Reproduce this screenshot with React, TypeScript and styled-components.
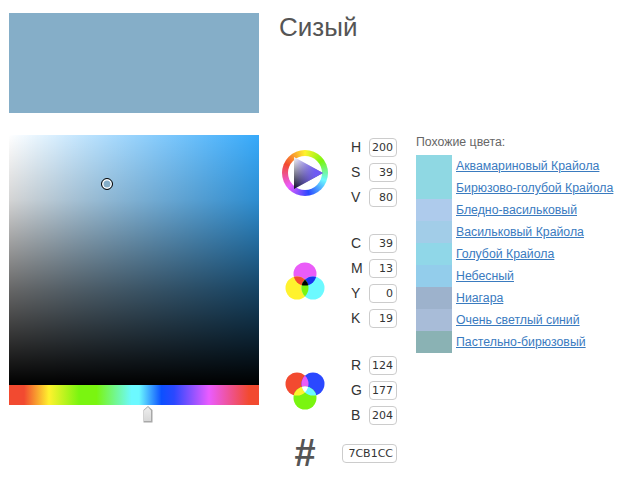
import { useId } from "react";
import styled, { createGlobalStyle } from "styled-components";

const HSV = { h: 200, s: 39, v: 80 };
const PICKER_SIZE = 250;

const SIMILAR_COLORS = [
  { name: "Аквамариновый Крайола", color: "#8fd8e3" },
  { name: "Бирюзово-голубой Крайола", color: "#8fd8e3" },
  { name: "Бледно-васильковый", color: "#aecbec" },
  { name: "Васильковый Крайола", color: "#a2cde8" },
  { name: "Голубой Крайола", color: "#90d7e8" },
  { name: "Небесный", color: "#93cdeb" },
  { name: "Ниагара", color: "#9db2cc" },
  { name: "Очень светлый синий", color: "#a8bcd8" },
  { name: "Пастельно-бирюзовый", color: "#8ab2b4" },
];

const RED = "#f24a30";
const GREEN = "#7af510";
const BLUE = "#2a48ff";
const CYAN = "#6cf9ff";
const MAGENTA = "#ea5cf8";
const YELLOW = "#fff22e";

function WheelIcon() {
  return (
    <WheelRing>
      <WheelTriangle width="46" height="46" viewBox="0 0 46 46">
        <defs>
          <linearGradient id="tri-shade" x1="0" y1="0" x2="0" y2="1">
            <stop offset="0" stopColor="#ffffff" />
            <stop offset="1" stopColor="#0a0a1e" />
          </linearGradient>
          <linearGradient id="tri-hue" x1="0" y1="0" x2="1" y2="0">
            <stop offset="0" stopColor="#6f5af5" stopOpacity="0" />
            <stop offset="0.75" stopColor="#6f5af5" />
          </linearGradient>
        </defs>
        <polygon points="12,7 41,23 12,39" fill="url(#tri-shade)" />
        <polygon points="12,7 41,23 12,39" fill="url(#tri-hue)" />
      </WheelTriangle>
    </WheelRing>
  );
}

interface VennCircle {
  cx: number;
  cy: number;
  fill: string;
}

interface VennIconProps {
  a: VennCircle;
  b: VennCircle;
  c: VennCircle;
  ab: string;
  ac: string;
  bc: string;
  abc: string;
}

// three overlapping discs, every overlap gets its own colour
function VennIcon({ a, b, c, ab, ac, bc, abc }: VennIconProps) {
  const id = useId();
  const r = 11.5;
  return (
    <IconSvg width="40" height="38" viewBox="0 0 40 38">
      <defs>
        <clipPath id={`${id}a`}>
          <circle cx={a.cx} cy={a.cy} r={r} />
        </clipPath>
        <clipPath id={`${id}b`}>
          <circle cx={b.cx} cy={b.cy} r={r} />
        </clipPath>
      </defs>
      <circle cx={a.cx} cy={a.cy} r={r} fill={a.fill} />
      <circle cx={b.cx} cy={b.cy} r={r} fill={b.fill} />
      <circle cx={c.cx} cy={c.cy} r={r} fill={c.fill} />
      <g clipPath={`url(#${id}a)`}>
        <circle cx={b.cx} cy={b.cy} r={r} fill={ab} />
        <circle cx={c.cx} cy={c.cy} r={r} fill={ac} />
      </g>
      <g clipPath={`url(#${id}b)`}>
        <circle cx={c.cx} cy={c.cy} r={r} fill={bc} />
      </g>
      <g clipPath={`url(#${id}a)`}>
        <g clipPath={`url(#${id}b)`}>
          <circle cx={c.cx} cy={c.cy} r={r} fill={abc} />
        </g>
      </g>
    </IconSvg>
  );
}

function ChannelRow(props: { label: string; value: string | number }) {
  return (
    <Row>
      <RowLabel>{props.label}</RowLabel>
      <ValueInput readOnly value={props.value} />
    </Row>
  );
}

export default function App() {
  return (
    <Page>
      <GlobalStyle />
      <Header>
        <Swatch />
        <Title>Сизый</Title>
      </Header>
      <Body>
        <PickerColumn>
          <Picker>
            <Marker
              style={{
                left: (HSV.s / 100) * PICKER_SIZE,
                top: ((100 - HSV.v) / 100) * PICKER_SIZE,
              }}
            />
          </Picker>
          <HueBar />
          <HueTrack>
            <HueThumb
              width="10"
              height="17"
              viewBox="0 0 10 17"
              style={{ left: (HSV.h / 360) * PICKER_SIZE }}
            >
              <defs>
                <linearGradient id="thumb" x1="0" y1="0" x2="0" y2="1">
                  <stop offset="0" stopColor="#eeeeee" />
                  <stop offset="1" stopColor="#d8d8d8" />
                </linearGradient>
              </defs>
              <polygon points="5,0 9.5,4 9.5,16.5 0.5,16.5 0.5,4" fill="#a8a8a8" />
              <polygon points="5,1 8,4.5 8,15 1,15 1,4.5" fill="url(#thumb)" />
            </HueThumb>
          </HueTrack>
        </PickerColumn>

        <Channels>
          <Group $top={3}>
            <IconCell>
              <WheelIcon />
            </IconCell>
            <Fields>
              <ChannelRow label="H" value={200} />
              <ChannelRow label="S" value={39} />
              <ChannelRow label="V" value={80} />
            </Fields>
          </Group>
          <Group $top={27}>
            <IconCell>
              <VennIcon
                a={{ cx: 20, cy: 12, fill: MAGENTA }}
                b={{ cx: 12, cy: 26, fill: YELLOW }}
                c={{ cx: 28, cy: 26, fill: CYAN }}
                ab={RED}
                ac="#1a30f0"
                bc={GREEN}
                abc="#000"
              />
            </IconCell>
            <Fields>
              <ChannelRow label="C" value={39} />
              <ChannelRow label="M" value={13} />
              <ChannelRow label="Y" value={0} />
              <ChannelRow label="K" value={19} />
            </Fields>
          </Group>
          <Group $top={28}>
            <IconCell>
              <VennIcon
                a={{ cx: 12, cy: 12, fill: RED }}
                b={{ cx: 28, cy: 12, fill: BLUE }}
                c={{ cx: 20, cy: 26, fill: GREEN }}
                ab={MAGENTA}
                ac={YELLOW}
                bc={CYAN}
                abc="#fff"
              />
            </IconCell>
            <Fields>
              <ChannelRow label="R" value={124} />
              <ChannelRow label="G" value={177} />
              <ChannelRow label="B" value={204} />
            </Fields>
          </Group>
          <Group $top={19}>
            <IconCell>
              <Hash>#</Hash>
            </IconCell>
            <HexInput readOnly value="7CB1CC" />
          </Group>
        </Channels>

        <Similar>
          <SimilarHeading>Похожие цвета:</SimilarHeading>
          {SIMILAR_COLORS.map((item) => (
            <SimilarRow key={item.name}>
              <SimilarChip $color={item.color} />
              <SimilarLink href="#">{item.name}</SimilarLink>
            </SimilarRow>
          ))}
        </Similar>
      </Body>
    </Page>
  );
}

const GlobalStyle = createGlobalStyle`
  html, body {
    margin: 0;
    background: #fff;
    font-family: "Liberation Sans", Arial, sans-serif;
  }
`;

const Page = styled.div`
  display: flex;
  flex-direction: column;
  gap: 22px;
  width: 630px;
  height: 480px;
  padding: 13px 0 0 9px;
  box-sizing: border-box;
  overflow: hidden;
`;

const Header = styled.div`
  display: flex;
  gap: 20px;
`;

const Swatch = styled.div`
  width: 250px;
  height: 100px;
  background: #85aec8;
`;

const Title = styled.h1`
  margin: 0;
  font-size: 26px;
  line-height: 28px;
  font-weight: normal;
  color: #555;
`;

const Body = styled.div`
  display: flex;
`;

const PickerColumn = styled.div`
  display: flex;
  flex-direction: column;
  width: 250px;
  margin-right: 21px;
`;

const Picker = styled.div`
  position: relative;
  height: 250px;
  background:
    linear-gradient(to bottom, rgba(0, 0, 0, 0), rgba(0, 0, 0, 0.17) 26%, rgba(0, 0, 0, 0.6) 62%, #000),
    linear-gradient(to right, #fff, rgba(255, 255, 255, 0.68) 30%, rgba(255, 255, 255, 0)),
    #36a9fa;
`;

const Marker = styled.div`
  position: absolute;
  width: 10px;
  height: 10px;
  margin: -7px 0 0 -6px;
  border: 1px solid #000;
  border-radius: 50%;
  background: #85aec8;
  box-shadow: inset 0 0 0 1.5px #fff;
  box-sizing: content-box;
`;

const HueBar = styled.div`
  height: 20px;
  background: linear-gradient(
    to right,
    #f24a30 0%,
    #f24a30 6%,
    #fff22e 16%,
    #7af510 28%,
    #7af510 35%,
    #6cf9ff 49%,
    #6cf9ff 52%,
    #0c50ff 61%,
    #2a48ff 66%,
    #ea5cff 80%,
    #f24a30 96%,
    #f24a30 100%
  );
`;

const HueTrack = styled.div`
  position: relative;
  height: 20px;
`;

const HueThumb = styled.svg`
  position: absolute;
  top: 1px;
  margin-left: -5px;
`;

const Channels = styled.div`
  display: flex;
  flex-direction: column;
  width: 117px;
  margin-right: 19px;
`;

const Group = styled.div<{ $top: number }>`
  display: flex;
  align-items: center;
  margin-top: ${(p) => p.$top}px;
`;

const IconCell = styled.div`
  display: flex;
  justify-content: center;
  align-items: center;
  flex: 0 0 50px;
`;

const Fields = styled.div`
  display: flex;
  flex-direction: column;
  gap: 6px;
  flex: 1;
`;

const Row = styled.div`
  display: flex;
  justify-content: space-between;
  align-items: center;
  padding-left: 21px;
`;

const RowLabel = styled.span`
  margin-bottom: 2px;
  font-size: 14px;
  color: #333;
`;

const ValueInput = styled.input`
  width: 28px;
  height: 19px;
  padding: 0 3px 0 0;
  box-sizing: border-box;
  border: 1px solid #ccc;
  border-radius: 4px;
  background: #fff;
  outline: none;
  font-family: "DejaVu Sans", Verdana, sans-serif;
  font-size: 11px;
  color: #333;
  text-align: right;
`;

const HexInput = styled(ValueInput)`
  width: 55px;
  margin-left: auto;
`;

const Hash = styled.span`
  font-size: 38px;
  line-height: 19px;
  font-weight: bold;
  color: #555;
`;

const WheelRing = styled.div`
  position: relative;
  width: 46px;
  height: 46px;
  border-radius: 50%;
  background: conic-gradient(
    #fff22e 0deg,
    #7af510 55deg,
    #6cf9ff 110deg,
    #2a48ff 170deg,
    #ea5cff 230deg,
    #f24a30 295deg,
    #fff22e 360deg
  );

  &::after {
    content: "";
    position: absolute;
    inset: 6px;
    border-radius: 50%;
    background: #fff;
  }
`;

const WheelTriangle = styled.svg`
  position: absolute;
  inset: 0;
  z-index: 1;
`;

const IconSvg = styled.svg`
  display: block;
`;

const Similar = styled.div`
  display: flex;
  flex-direction: column;
`;

const SimilarHeading = styled.div`
  height: 20px;
  font-size: 12.3px;
  line-height: 15px;
  color: #666;
`;

const SimilarRow = styled.div`
  display: flex;
  align-items: center;
  gap: 4px;
  height: 22px;
`;

const SimilarChip = styled.div<{ $color: string }>`
  align-self: stretch;
  width: 36px;
  background: ${(p) => p.$color};
`;

const SimilarLink = styled.a`
  font-size: 12.3px;
  color: #3a7bbf;
  text-decoration: underline;
  white-space: nowrap;
`;
